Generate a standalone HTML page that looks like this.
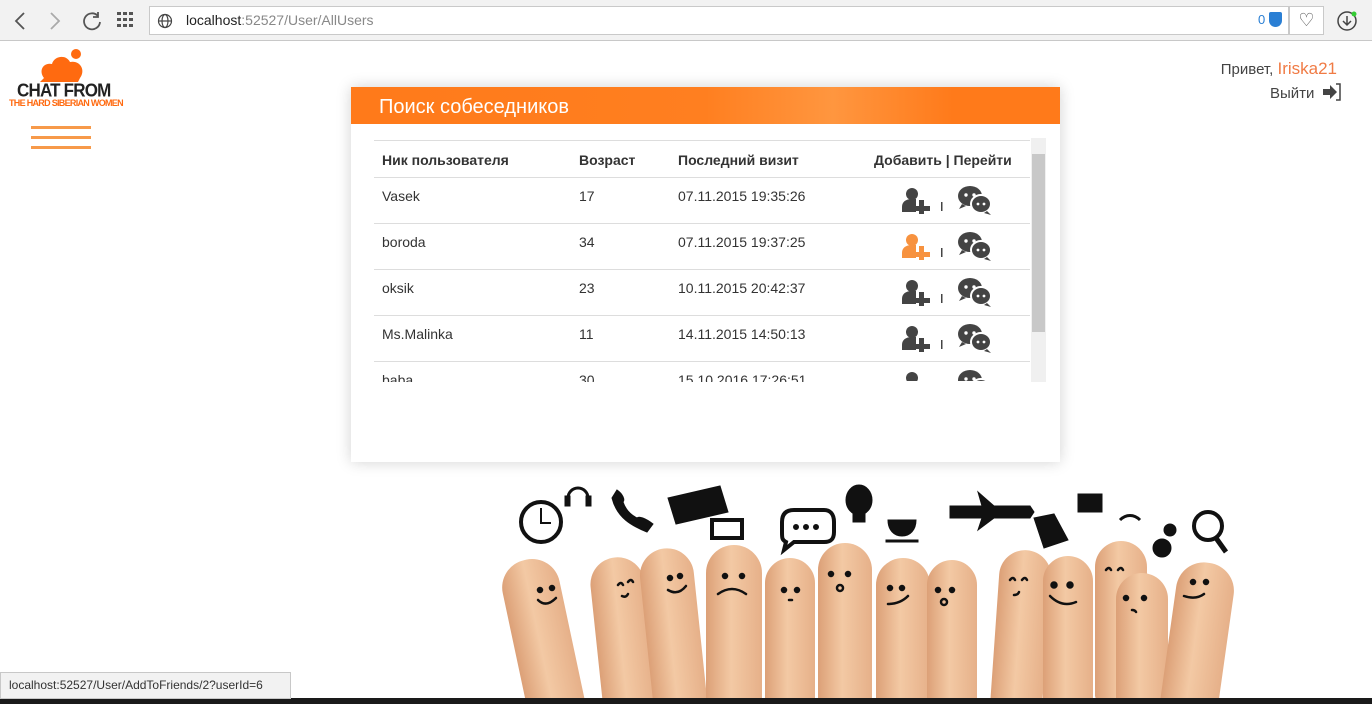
<!DOCTYPE html>
<html style="overflow:hidden;width:1372px;height:704px"><head><meta charset="utf-8"><style>
*{margin:0;padding:0;box-sizing:border-box}
body{width:1372px;height:704px;overflow:hidden;background:#fff;font-family:"Liberation Sans",sans-serif;position:relative}
.bar{position:absolute;left:0;top:0;width:1372px;height:41px;background:#f2f2f2;border-bottom:1px solid #c8c8c8}
.url{position:absolute;left:149px;top:6px;width:1140px;height:29px;background:#fff;border:1px solid #c9c9c9;font-size:14px;line-height:27px;padding-left:36px;color:#222}
.url span{color:#888}
.abs{position:absolute}
.card{position:absolute;left:351px;top:87px;width:709px;height:375px;background:#fff;box-shadow:0 0 14px rgba(0,0,0,.18)}
.head{height:37px;background:linear-gradient(90deg,#ff7a1a 0%,#ff7f20 50%,#ff963f 68%,#ff7a1a 85%,#ff7a1a 100%);color:#fff;font-size:20px;line-height:40px;padding-left:28px}
.tbl{position:absolute;left:23px;top:53px;width:656px;height:242px;overflow:hidden;border-top:1px solid #ddd}
.row{height:46px;border-bottom:1px solid #ddd;position:relative;font-size:14px;color:#333}
.row div{position:absolute;top:10px}
.hr{height:37px;font-weight:bold;color:#333}
.hr div{top:11px}
.sb{position:absolute;left:680px;top:51px;width:15px;height:244px;background:#f0f0f0}
.fw{position:absolute;left:480px;top:470px;width:780px;height:228px;overflow:hidden}
.fing{position:absolute;background:linear-gradient(90deg,#dca077,#f3c9a4 45%,#e6b089);border-radius:28px 28px 6px 6px}
</style></head><body>
<div class="bar">
<svg class="abs" style="left:10px;top:10px" width="130" height="22" viewBox="0 0 130 22" fill="none" stroke="#555" stroke-width="1.8"><path d="M14 3l-8 8 8 8"/><path d="M41 3l8 8-8 8" stroke="#aaa"/><path d="M88 6a8 8 0 1 0 2 6M88 2v5h-5"/></svg>
<svg class="abs" style="left:117px;top:12px" width="18" height="16" fill="#555"><rect x="0" y="0" width="4" height="3"/><rect x="6" y="0" width="4" height="3"/><rect x="12" y="0" width="4" height="3"/><rect x="0" y="6" width="4" height="3"/><rect x="6" y="6" width="4" height="3"/><rect x="12" y="6" width="4" height="3"/><rect x="0" y="12" width="4" height="3"/><rect x="6" y="12" width="4" height="3"/><rect x="12" y="12" width="4" height="3"/></svg>
<div class="url">localhost<span>:52527/User/AllUsers</span></div>
<svg class="abs" style="left:157px;top:13px" width="16" height="16" fill="none" stroke="#444" stroke-width="1.2"><circle cx="8" cy="8" r="6.5"/><ellipse cx="8" cy="8" rx="3" ry="6.5"/><path d="M1.5 8h13"/></svg>
<div class="abs" style="left:1258px;top:12px;font-size:13px;color:#2a7fd4">0</div>
<div class="abs" style="left:1269px;top:12px;width:13px;height:15px;background:#2a7fd4;border-radius:2px 2px 7px 7px"></div>
<div class="abs" style="left:1289px;top:6px;width:35px;height:29px;border:1px solid #c9c9c9;background:#fff;text-align:center;line-height:27px;font-size:18px;color:#555">♡</div>
<svg class="abs" style="left:1336px;top:9px" width="24" height="24" fill="none" stroke="#444" stroke-width="1.5"><circle cx="11" cy="12" r="9"/><path d="M11 7v9M7 12l4 4 4-4"/><circle cx="18" cy="5" r="2.5" fill="#3c3" stroke="none"/></svg>
</div>
<svg class="abs" style="left:36px;top:48px" width="56" height="36"><circle cx="40" cy="6" r="5" fill="#ff6a10"/><path d="M4 34 L8 30 C2 22 8 14 16 16 C18 8 30 6 34 14 C44 12 50 22 44 30 L42 34Z" fill="#ff6a10"/></svg>
<div class="abs" style="left:17px;top:81px;font-size:17px;font-weight:bold;color:#222;letter-spacing:-0.8px;transform:scaleY(1.1)">CHAT FROM</div>
<div class="abs" style="left:9px;top:98px;font-size:9px;font-weight:bold;color:#ff6a10;letter-spacing:-0.7px">THE HARD SIBERIAN WOMEN</div>
<div class="abs" style="left:31px;top:126px;width:60px;height:3px;background:#f79a4a"></div>
<div class="abs" style="left:31px;top:136px;width:60px;height:3px;background:#f79a4a"></div>
<div class="abs" style="left:31px;top:146px;width:60px;height:3px;background:#f79a4a"></div>
<div class="abs" style="right:35px;top:59px;font-size:15px;color:#444">Привет, <span style="color:#f07b45;font-size:17px">Iriska21</span></div>
<div class="abs" style="left:1270px;top:85px;font-size:15px;color:#444">Выйти</div>
<svg class="abs" style="left:1322px;top:83px" width="20" height="18"><path d="M1 6h7V2l7 7-7 7v-4H1z" fill="#444"/><path d="M14 1h4v16h-4" fill="none" stroke="#444" stroke-width="1.5"/></svg>

<div class="card"><div class="head">Поиск собеседников</div>
<div class="tbl">
<div class="row hr"><div style="left:8px">Ник пользователя</div><div style="left:205px">Возраст</div><div style="left:304px">Последний визит</div><div style="left:500px">Добавить | Перейти</div></div>
<div class="row"><div style="left:8px">Vasek</div><div style="left:205px">17</div><div style="left:304px">07.11.2015 19:35:26</div></div>
<div class="row"><div style="left:8px">boroda</div><div style="left:205px">34</div><div style="left:304px">07.11.2015 19:37:25</div></div>
<div class="row"><div style="left:8px">oksik</div><div style="left:205px">23</div><div style="left:304px">10.11.2015 20:42:37</div></div>
<div class="row"><div style="left:8px">Ms.Malinka</div><div style="left:205px">11</div><div style="left:304px">14.11.2015 14:50:13</div></div>
<div class="row"><div style="left:8px">baba</div><div style="left:205px">30</div><div style="left:304px">15.10.2016 17:26:51</div></div>
</div>
<div class="sb"><div style="position:absolute;left:1px;top:16px;width:13px;height:178px;background:#c8c8c8"></div></div>
</div>
<svg class="abs" style="left:900px;top:185px" width="95" height="196">
<defs>
<g id="u"><circle cx="11" cy="6" r="6"/><path d="M1 24v-5c0-6 5-8 10-8h4v13z"/><path d="M18 12h5v6h6v5h-6v3h-5v-3h-6v-5h6z"/></g>
<g id="c"><ellipse cx="14" cy="11" rx="12" ry="10"/><path d="M6 19l-3 5 7-3z"/><ellipse cx="25" cy="19" rx="10" ry="9" stroke="#fff" stroke-width="2"/><path d="M31 26l4 4-7-2z"/><circle cx="10" cy="10" r="1.7" fill="#fff"/><circle cx="18" cy="10" r="1.7" fill="#fff"/><circle cx="22" cy="19" r="1.4" fill="#fff"/><circle cx="28" cy="19" r="1.4" fill="#fff"/></g>
</defs>
<g fill="#444">
<use href="#u" x="1" y="3"/><rect x="41" y="17" width="1.5" height="9"/><use href="#c" x="56" y="0"/>
<use href="#u" x="1" y="49" fill="#f7923f"/><rect x="41" y="63" width="1.5" height="9"/><use href="#c" x="56" y="46"/>
<use href="#u" x="1" y="95"/><rect x="41" y="109" width="1.5" height="9"/><use href="#c" x="56" y="92"/>
<use href="#u" x="1" y="141"/><rect x="41" y="155" width="1.5" height="9"/><use href="#c" x="56" y="138"/>
<use href="#u" x="1" y="187"/><use href="#c" x="56" y="184"/>
</g></svg>

<div class="fw">
<div class="fing" style="left:34px;top:88px;width:58px;height:170px;transform:rotate(-12deg)"></div>
<div class="fing" style="left:116px;top:87px;width:54px;height:160px;transform:rotate(-6deg)"></div>
<div class="fing" style="left:166px;top:78px;width:54px;height:170px;transform:rotate(-6deg)"></div>
<div class="fing" style="left:226px;top:75px;width:56px;height:160px"></div>
<div class="fing" style="left:285px;top:88px;width:50px;height:150px"></div>
<div class="fing" style="left:338px;top:73px;width:54px;height:160px"></div>
<div class="fing" style="left:396px;top:88px;width:54px;height:150px"></div>
<div class="fing" style="left:447px;top:90px;width:50px;height:150px"></div>
<div class="fing" style="left:515px;top:80px;width:52px;height:170px;transform:rotate(4deg)"></div>
<div class="fing" style="left:563px;top:86px;width:50px;height:150px"></div>
<div class="fing" style="left:615px;top:71px;width:52px;height:160px"></div>
<div class="fing" style="left:636px;top:103px;width:52px;height:130px"></div>
<div class="fing" style="left:688px;top:92px;width:58px;height:170px;transform:rotate(8deg)"></div>
<svg style="position:absolute;left:0;top:0" width="780" height="228" fill="none" stroke="#111" stroke-width="2.5" stroke-linecap="round">
<circle cx="60" cy="120" r="2" fill="#111"/><circle cx="72" cy="118" r="2" fill="#111"/><path d="M58 130q8 8 18-2"/>
<path d="M138 115q3-4 5 0M148 112q3-4 5 0M142 126q4 2 6-2"/>
<circle cx="190" cy="108" r="2" fill="#111"/><circle cx="200" cy="106" r="2" fill="#111"/><path d="M188 120q10 6 18-4"/>
<circle cx="245" cy="106" r="2" fill="#111"/><circle cx="262" cy="106" r="2" fill="#111"/><path d="M238 124q14-10 28 0"/>
<circle cx="304" cy="120" r="2" fill="#111"/><circle cx="317" cy="120" r="2" fill="#111"/><path d="M309 130h3"/>
<circle cx="351" cy="104" r="2" fill="#111"/><circle cx="368" cy="104" r="2" fill="#111"/><circle cx="360" cy="118" r="3"/>
<circle cx="410" cy="118" r="2" fill="#111"/><circle cx="422" cy="118" r="2" fill="#111"/><path d="M408 134q12 0 20-8"/>
<circle cx="458" cy="120" r="2" fill="#111"/><circle cx="472" cy="120" r="2" fill="#111"/><circle cx="464" cy="132" r="3"/>
<path d="M530 110q3-4 5 0M542 110q3-4 5 0M534 125q4 0 5-3"/>
<circle cx="574" cy="115" r="2.5" fill="#111"/><circle cx="590" cy="115" r="2.5" fill="#111"/><path d="M570 126q12 12 26 6"/>
<path d="M626 100q3-4 5 0M638 100q3-4 5 0"/>
<circle cx="646" cy="128" r="2" fill="#111"/><circle cx="664" cy="128" r="2" fill="#111"/><path d="M652 140q3 0 4 2"/>
<circle cx="713" cy="112" r="2" fill="#111"/><circle cx="726" cy="112" r="2" fill="#111"/><path d="M704 126q12 4 20-2"/>
</svg>
</div>
<svg class="abs" style="left:500px;top:478px" width="740" height="80" fill="#111" stroke="#111">
<circle cx="41" cy="44" r="20" fill="#fff" stroke-width="4"/><path d="M41 30v15h10" fill="none" stroke-width="2"/>
<path d="M68 20a10 10 0 0 1 20 0" fill="none" stroke-width="3"/><rect x="65" y="18" width="5" height="10"/><rect x="86" y="18" width="5" height="10"/>
<path d="M112 20c5 20 20 28 35 34l6-8c-8-6-14-8-16-6-8-4-12-10-14-16 2-2 0-8-6-12z"/>
<path d="M168 20l52-12 8 26-52 12z"/><rect x="212" y="42" width="30" height="18" fill="#fff" stroke-width="4"/>
<path d="M282 44c0-8 4-12 12-12h30c6 0 10 4 10 12v10c0 8-4 10-10 10h-30l-10 8 2-8c-4-2-4-4-4-10z" fill="#fff" stroke-width="4"/>
<circle cx="296" cy="49" r="2.5"/><circle cx="306" cy="49" r="2.5"/><circle cx="316" cy="49" r="2.5"/>
<ellipse cx="359" cy="22" rx="13" ry="15"/><rect x="353" y="34" width="12" height="10"/>
<path d="M388 42h28c0 10-6 16-14 16s-14-6-14-16z"/><rect x="386" y="62" width="32" height="2"/>
<path d="M450 28h80l4 6-4 6h-80z"/><path d="M478 14l16 14h-12zM478 52l16-12h-12z"/>
<path d="M534 40l20-4 14 26-24 8z"/>
<rect x="578" y="16" width="24" height="18"/><path d="M620 42c6-6 14-6 20 0" fill="none" stroke-width="3"/>
<circle cx="662" cy="70" r="9"/><circle cx="670" cy="52" r="6"/><circle cx="708" cy="48" r="14" fill="#fff" stroke-width="4"/><path d="M716 60l10 14" stroke-width="5"/>
</svg>
<div class="abs" style="left:0;top:698px;width:1372px;height:6px;background:#1a1a1a"></div>
<div class="abs" style="left:0;top:672px;width:291px;height:27px;background:#f2f2f2;border:1px solid #c8c8c8;font-size:12px;line-height:25px;padding-left:8px;color:#333">localhost:52527/User/AddToFriends/2?userId=6</div>
</body></html>
